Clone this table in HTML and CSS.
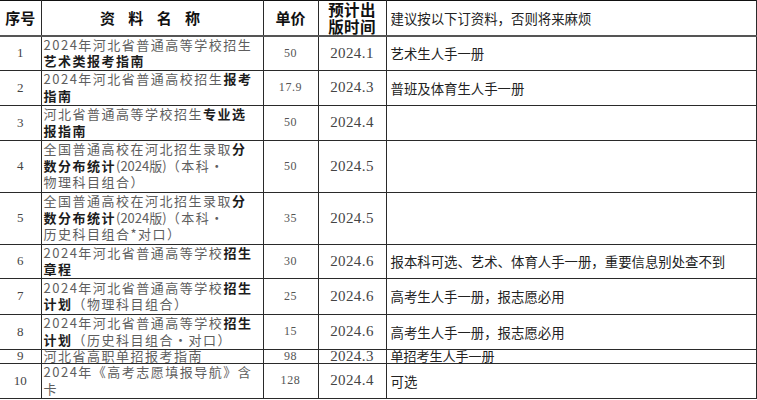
FILE: index.html
```html
<!DOCTYPE html>
<html lang="zh">
<head>
<meta charset="utf-8">
<link rel="stylesheet" href="styles.css">
</head>
<body>
<table class="sheet">
  <colgroup>
    <col class="c-no"><col class="c-name"><col class="c-price"><col class="c-date"><col class="c-note">
  </colgroup>
  <thead>
    <tr class="h-row">
      <th class="th-no">序号</th>
      <th class="th-name">资 料 名 称</th>
      <th class="th-price">单价</th>
      <th class="th-date">预计出<br>版时间</th>
      <th class="th-note">建议按以下订资料，否则将来麻烦</th>
    </tr>
  </thead>
  <tbody>
    <tr class="h34">
      <td class="no">1</td>
      <td class="name">2024年河北省普通高等学校招生<br><b>艺术类报考指南</b></td>
      <td class="price">50</td>
      <td class="date">2024.1</td>
      <td class="note">艺术生人手一册</td>
    </tr>
    <tr class="h35">
      <td class="no">2</td>
      <td class="name">2024年河北省普通高校招生<b>报考</b><br><b>指南</b></td>
      <td class="price">17.9</td>
      <td class="date">2024.3</td>
      <td class="note">普班及体育生人手一册</td>
    </tr>
    <tr class="h35">
      <td class="no">3</td>
      <td class="name">河北省普通高等学校招生<b>专业选</b><br><b>报指南</b></td>
      <td class="price">50</td>
      <td class="date">2024.4</td>
      <td class="note"></td>
    </tr>
    <tr class="h52">
      <td class="no">4</td>
      <td class="name">全国普通高校在河北招生录取<b>分</b><br><b>数分布统计</b><span class="par">(2024版)</span>（本科·<br>物理科目组合）</td>
      <td class="price">50</td>
      <td class="date">2024.5</td>
      <td class="note"></td>
    </tr>
    <tr class="h52">
      <td class="no">5</td>
      <td class="name">全国普通高校在河北招生录取<b>分</b><br><b>数分布统计</b><span class="par">(2024版)</span>（本科·<br>历史科目组合*对口）</td>
      <td class="price">35</td>
      <td class="date">2024.5</td>
      <td class="note"></td>
    </tr>
    <tr class="h34">
      <td class="no">6</td>
      <td class="name">2024年河北省普通高等学校<b>招生</b><br><b>章程</b></td>
      <td class="price">30</td>
      <td class="date">2024.6</td>
      <td class="note">报本科可选、艺术、体育人手一册，重要信息别处查不到</td>
    </tr>
    <tr class="h36">
      <td class="no">7</td>
      <td class="name">2024年河北省普通高等学校<b>招生</b><br><b>计划</b>（物理科目组合）</td>
      <td class="price">25</td>
      <td class="date">2024.6</td>
      <td class="note">高考生人手一册，报志愿必用</td>
    </tr>
    <tr class="h35">
      <td class="no">8</td>
      <td class="name">2024年河北省普通高等学校<b>招生</b><br><b>计划</b>（历史科目组合·对口）</td>
      <td class="price">15</td>
      <td class="date">2024.6</td>
      <td class="note">高考生人手一册，报志愿必用</td>
    </tr>
    <tr class="h15">
      <td class="no">9</td>
      <td class="name">河北省高职单招报考指南</td>
      <td class="price">98</td>
      <td class="date">2024.3</td>
      <td class="note">单招考生人手一册</td>
    </tr>
    <tr class="h35">
      <td class="no">10</td>
      <td class="name">2024年《高考志愿填报导航》含<br>卡</td>
      <td class="price">128</td>
      <td class="date">2024.4</td>
      <td class="note">可选</td>
    </tr>
  </tbody>
</table>
</body>
</html>
```

FILE: styles.css
```css
html, body {
  margin: 0;
  padding: 0;
  background: #ffffff;
}

.sheet {
  width: 756px;
  border-collapse: collapse;
  table-layout: fixed;
  font-family: "Noto Sans CJK SC", "Noto Sans", sans-serif;
  color: #222;
}

.c-no { width: 41px; }
.c-name { width: 222px; }
.c-price { width: 55px; }
.c-date { width: 68px; }
.c-note { width: 370px; }

.sheet th,
.sheet td {
  border: 1px solid #2a2a2a;
  padding: 0;
  vertical-align: middle;
  white-space: nowrap;
}

.sheet td { overflow: hidden; }

.sheet th:first-child,
.sheet td:first-child {
  border-left: none;
}

.sheet th { border-top: 1px solid #111; }

.h-row { height: 35px; }
.h-row th {
  border-bottom: 2px solid #555;
  font-weight: 700;
  color: #111;
}

.th-no { font-size: 15px; text-align: center; }
.th-name { font-size: 15px; text-align: center; letter-spacing: 4px; word-spacing: 2px; }
.th-price { font-size: 15px; text-align: center; }
.th-date { font-size: 15.5px; line-height: 16.5px; text-align: center; letter-spacing: 0.3px; }
.th-note {
  font-size: 13.4px;
  font-weight: 400 !important;
  text-align: left;
  padding-left: 4px !important;
  color: #222 !important;
}

.h34 { height: 34px; }
.h35 { height: 35px; }
.h36 { height: 36px; }
.h52 { height: 52px; }
.h15 { height: 14px; }

.no {
  text-align: center;
  font-family: "Liberation Serif", serif;
  font-size: 13px;
  color: #444;
}

.name {
  text-align: left;
  padding-left: 2px !important;
  font-size: 13px;
  line-height: 16.5px;
  letter-spacing: 1.5px;
  color: #5e5e5e;
}

.name b {
  font-weight: 700;
  color: #1c1c1c;
}

.par {
  letter-spacing: 0;
}

.price {
  text-align: center;
  font-family: "Liberation Serif", serif;
  font-size: 12px;
  color: #555;
  letter-spacing: 0.6px;
}

.date {
  text-align: center;
  font-family: "Liberation Serif", serif;
  font-size: 15px;
  color: #444;
  letter-spacing: 0.4px;
}

.note {
  text-align: left;
  padding-left: 4px !important;
  font-size: 13.4px;
  color: #222;
}

.sheet .h15 td {
  line-height: 12px;
  overflow: visible;
}

.h15 .name,
.h15 .note {
  font-size: 13px;
}
```
